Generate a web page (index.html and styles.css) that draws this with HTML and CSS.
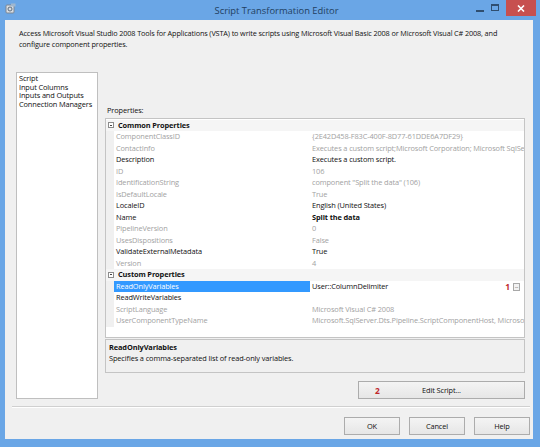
FILE: index.html
```html
<!DOCTYPE html>
<html lang="en">
<head>
    <meta charset="UTF-8">
    <title>Script Transformation Editor</title>
    <link rel="stylesheet" href="styles.css">
</head>
<body>
    <div class="window">
        <div class="titlebar">
            <div class="app-icon">
                <svg width="11" height="11" viewBox="0 0 11 11">
                    <rect x="1" y="2" width="8" height="8" rx="1" fill="#d8dde3" stroke="#7d8794" stroke-width="1"/>
                    <circle cx="5" cy="6" r="2" fill="none" stroke="#5d6c7c" stroke-width="1"/>
                    <rect x="6" y="0.5" width="4.5" height="3" fill="#9fb7cf"/>
                </svg>
            </div>
            <div class="title">Script Transformation Editor</div>
            <div class="controls">
                <span class="ctl-min"></span>
                <span class="ctl-max"></span>
                <span class="ctl-close">
                    <svg width="8" height="7" viewBox="0 0 8 7">
                        <path d="M1 0.5 L7 6.5 M7 0.5 L1 6.5" stroke="#fff" stroke-width="1.6"/>
                    </svg>
                </span>
            </div>
        </div>

        <div class="client">
            <div class="intro">
                Access Microsoft Visual Studio 2008 Tools for Applications (VSTA) to write scripts using Microsoft Visual Basic 2008 or Microsoft Visual C# 2008, and<br>
                configure component properties.
            </div>

            <div class="main">
                <div class="pages">
                    <div>Script</div>
                    <div>Input Columns</div>
                    <div>Inputs and Outputs</div>
                    <div>Connection Managers</div>
                </div>

                <div class="panel">
                    <div class="panel-label">Properties:</div>

                    <div class="grid">
                        <div class="row category"><span class="toggle"></span><span class="cat-name">Common Properties</span></div>
                        <div class="row ro"><span class="name">ComponentClassID</span><span class="value">{2E42D458-F83C-400F-8D77-61DDE6A7DF29}</span></div>
                        <div class="row ro"><span class="name">ContactInfo</span><span class="value">Executes a custom script;Microsoft Corporation; Microsoft SqlServer v10; (C) 2007 Microsoft Corporation</span></div>
                        <div class="row"><span class="name">Description</span><span class="value">Executes a custom script.</span></div>
                        <div class="row ro"><span class="name">ID</span><span class="value">106</span></div>
                        <div class="row ro"><span class="name">IdentificationString</span><span class="value">component "Split the data" (106)</span></div>
                        <div class="row ro"><span class="name">IsDefaultLocale</span><span class="value">True</span></div>
                        <div class="row"><span class="name">LocaleID</span><span class="value">English (United States)</span></div>
                        <div class="row"><span class="name">Name</span><span class="value bold">Split the data</span></div>
                        <div class="row ro"><span class="name">PipelineVersion</span><span class="value">0</span></div>
                        <div class="row ro"><span class="name">UsesDispositions</span><span class="value">False</span></div>
                        <div class="row"><span class="name">ValidateExternalMetadata</span><span class="value">True</span></div>
                        <div class="row ro"><span class="name">Version</span><span class="value">4</span></div>
                        <div class="row category"><span class="toggle"></span><span class="cat-name">Custom Properties</span></div>
                        <div class="row selected">
                            <span class="name">ReadOnlyVariables</span>
                            <span class="value">User::ColumnDelimiter</span>
                            <span class="marker">1</span>
                            <span class="ellipsis">...</span>
                        </div>
                        <div class="row"><span class="name">ReadWriteVariables</span><span class="value"></span></div>
                        <div class="row ro"><span class="name">ScriptLanguage</span><span class="value">Microsoft Visual C# 2008</span></div>
                        <div class="row ro"><span class="name">UserComponentTypeName</span><span class="value">Microsoft.SqlServer.Dts.Pipeline.ScriptComponentHost, Microsoft.SqlServer.TxScript</span></div>
                    </div>

                    <div class="help">
                        <div class="help-title">ReadOnlyVariables</div>
                        <div>Specifies a comma-separated list of read-only variables.</div>
                    </div>

                    <div class="edit-row">
                        <button class="btn edit-btn"><span class="marker">2</span>Edit Script...</button>
                    </div>
                </div>
            </div>

            <div class="separator"></div>

            <div class="footer">
                <button class="btn">OK</button>
                <button class="btn">Cancel</button>
                <button class="btn">Help</button>
            </div>
        </div>
    </div>
</body>
</html>
```

FILE: styles.css
```css
:root {
    --frame: #6aa6e6;
    --face: #f0f0f0;
    --border: #c4c4c4;
    --muted: #a2a2a2;
    --text: #111;
    --select: #3399ff;
}

* {
    margin: 0;
    padding: 0;
    box-sizing: border-box;
}

body {
    font-family: "Open Sans", "Noto Sans", sans-serif;
    font-size: 7.4px;
    letter-spacing: -0.12px;
    color: var(--text);
    background: var(--frame);
}

.window {
    width: 540px;
    height: 447px;
    display: flex;
    flex-direction: column;
    background: var(--frame);
    padding: 0 7px 8px 5px;
}

/* title bar */

.titlebar {
    height: 20px;
    display: flex;
    align-items: center;
    position: relative;
}

.app-icon {
    width: 12px;
    height: 12px;
    margin-top: -2px;
}

.title {
    flex: 1;
    text-align: center;
    font-size: 9.4px;
    letter-spacing: 0;
    color: #22405f;
    margin-right: -3px;
}

.controls {
    position: absolute;
    right: -3px;
    top: 0;
    display: flex;
    align-items: flex-start;
}

.ctl-min {
    width: 8px;
    height: 2px;
    background: #2f4e70;
    margin: 10px 7px 0 0;
}

.ctl-max {
    width: 8px;
    height: 7px;
    border: 1px solid #2f4e70;
    border-top-width: 2px;
    margin: 4px 7px 0 0;
}

.ctl-close {
    width: 30px;
    height: 16px;
    background: #c7504f;
    display: flex;
    align-items: center;
    justify-content: center;
}

/* client area */

.client {
    flex: 1;
    background: var(--face);
    display: flex;
    flex-direction: column;
    padding: 0 3px 0 7px;
}

.intro {
    padding: 8px 0 0 7px;
    line-height: 11px;
    height: 52px;
    font-size: 7.3px;
    letter-spacing: -0.13px;
    white-space: nowrap;
}

.main {
    display: flex;
    gap: 7px;
    padding-left: 4px;
}

.pages {
    width: 82px;
    height: 327px;
    background: #fff;
    border: 1px solid #bfbfbf;
    padding: 1px 2px;
    line-height: 8.5px;
}

.panel {
    flex: 1;
    display: flex;
    flex-direction: column;
    padding-top: 33px;
}

.panel-label {
    padding-left: 2px;
    height: 13px;
}

/* property grid */

.grid {
    width: 420px;
    height: 220px;
    background: #fff;
    border: 1px solid var(--border);
    padding-top: 0.5px;
    overflow: hidden;
}

.row {
    display: flex;
    height: 11.5px;
    line-height: 11.5px;
    padding-left: 8px;
    background: linear-gradient(to right, var(--face) 8px, #fff 8px);
    white-space: nowrap;
    position: relative;
}

.row .name {
    width: 196px;
    padding-left: 2px;
    overflow: hidden;
}

.row .value {
    flex: 1;
    padding-left: 2px;
    overflow: hidden;
}

.row.ro {
    color: var(--muted);
}

.bold {
    font-weight: bold;
}

.row.category {
    background: #f5f5f5;
    padding-left: 2px;
    font-weight: bold;
    align-items: center;
}

.toggle {
    width: 6px;
    height: 6px;
    border: 1px solid #8c8c8c;
    background: #fff;
    margin-right: 4px;
    position: relative;
}

.toggle::after {
    content: "";
    position: absolute;
    left: 1px;
    top: 1.5px;
    width: 2px;
    height: 1px;
    background: #444;
}

.row.selected .name {
    background: var(--select);
    color: #fff;
}

.row .marker {
    color: #c0282b;
    font-weight: bold;
    font-size: 8.4px;
    margin-right: 3px;
}

.ellipsis {
    width: 7px;
    height: 8px;
    margin: 2px 4px 0 0;
    border: 1px solid #a8a8a8;
    background: #f2f2f2;
    font-size: 5px;
    line-height: 4px;
    text-align: center;
    color: #333;
}

.help {
    width: 420px;
    height: 34px;
    margin-top: 1px;
    border: 1px solid var(--border);
    padding: 2px 3px;
    line-height: 10.5px;
}

.help-title {
    font-weight: bold;
}

.edit-row {
    display: flex;
    justify-content: flex-end;
    padding: 8px 0 0;
    width: 420px;
}

/* buttons */

.btn {
    font-family: inherit;
    font-size: 7.4px;
    letter-spacing: -0.12px;
    color: var(--text);
    height: 18px;
    width: 56px;
    background: linear-gradient(#f4f4f4, #e6e6e6);
    border: 1px solid #acacac;
}

.edit-btn {
    width: 167px;
    position: relative;
}

.edit-btn .marker {
    position: absolute;
    left: 16px;
    top: 3px;
    color: #c0282b;
    font-weight: bold;
    font-size: 8.4px;
}

.separator {
    height: 1px;
    background: #d0d0d0;
    border-bottom: 1px solid #fff;
    box-sizing: content-box;
    margin: 7px 0 0 0;
}

.footer {
    display: flex;
    justify-content: flex-end;
    gap: 9px;
    padding: 9px 0 0;
}
```
